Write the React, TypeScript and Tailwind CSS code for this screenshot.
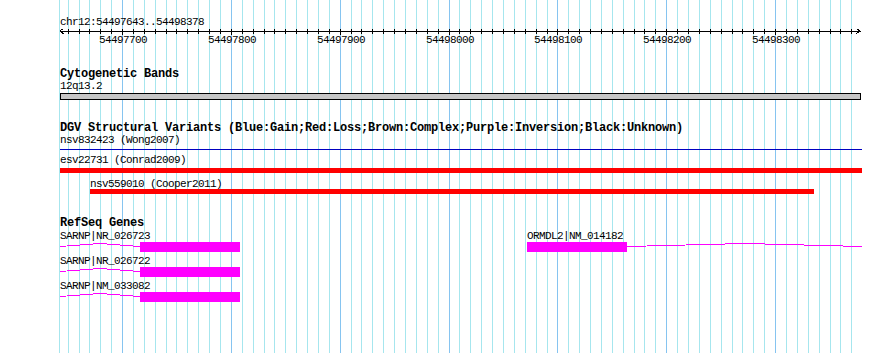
import React from 'react';

const START = 54497643;
const END = 54498378;
const LEFT = 60;
const SPAN = 800;

const toX = (bp: number) => LEFT + Math.round(((bp - START) * SPAN) / (END - START));

const GRID_BP: number[] = [];
for (let bp = 54497650; bp <= END; bp += 10) GRID_BP.push(bp);

const MAJOR_BP = GRID_BP.filter((bp) => bp % 100 === 0);

function Grid() {
  return (
    <svg
      className="absolute inset-0"
      width={890}
      height={353}
      shapeRendering="crispEdges"
    >
      <rect x={59} y={0} width={1} height={353} fill="#a6e6ee" />
      {GRID_BP.map((bp) => (
        <rect
          key={bp}
          x={toX(bp)}
          y={0}
          width={1}
          height={353}
          fill={bp % 100 === 0 ? '#86c4f0' : '#a6e6ee'}
        />
      ))}
    </svg>
  );
}

function Ruler() {
  return (
    <svg className="block" width={890} height={18} shapeRendering="crispEdges">
      <rect x={60} y={2} width={801} height={1} fill="#000" />
      <polyline points="64,-1 60,2 64,5" fill="none" stroke="#000" strokeWidth={1} />
      <polyline points="856,-1 860,2 856,5" fill="none" stroke="#000" strokeWidth={1} />
      {GRID_BP.map((bp) => (
        <rect key={bp} x={toX(bp)} y={0} width={1} height={bp % 100 === 0 ? 6 : 5} fill="#000" />
      ))}
      {MAJOR_BP.map((bp) => (
        <text
          key={bp}
          x={toX(bp) + 1}
          y={14}
          textAnchor="middle"
          fontFamily="'Liberation Mono', monospace"
          fontSize={11}
          letterSpacing={-0.6}
          fill="#000"
        >
          {bp}
        </text>
      ))}
    </svg>
  );
}

// intron "hat" from x1 to x2, peak at the middle
function Intron({ x1, x2 }: { x1: number; x2: number }) {
  const mid = Math.round((x1 + x2) / 2);
  return (
    <polyline
      points={`${x1},4.5 ${mid},1.5 ${x2},4.5`}
      fill="none"
      stroke="#ff00ff"
      strokeWidth={1}
    />
  );
}

const SARNP = ['SARNP|NR_026723', 'SARNP|NR_026722', 'SARNP|NM_033082'];

const title = 'h-[13px] text-[12px] leading-[13px] font-bold tracking-[-0.2px] whitespace-nowrap';
const small = 'h-[10px] text-[11px] leading-[10px] tracking-[-0.6px] whitespace-nowrap';

export default function App() {
  return (
    <div className="relative w-[890px] h-[353px] overflow-hidden bg-white font-['Liberation_Mono',monospace] text-black">
      <Grid />

      <div className="relative pt-[16px]">
        <div className="pl-[60px] h-[13px] text-[11px] leading-[13px] tracking-[-0.6px]">
          chr12:54497643..54498378
        </div>
        <Ruler />

        {/* Cytogenetic Bands */}
        <div className={`mt-[21px] pl-[60px] ${title}`}>Cytogenetic Bands</div>
        <div className={`pl-[60px] ${small}`}>12q13.2</div>
        <div className="mt-[2px] ml-[60px] w-[801px] h-[7px] border border-black bg-[#c6c6c6]" />

        {/* DGV */}
        <div className={`mt-[22px] pl-[60px] ${title}`}>
          DGV Structural Variants (Blue:Gain;Red:Loss;Brown:Complex;Purple:Inversion;Black:Unknown)
        </div>
        <div className={`pl-[60px] ${small}`}>nsv832423 (Wong2007)</div>
        <div className="mt-[4px] ml-[60px] w-[802px] h-px bg-[#0000c0]" />
        <div className={`mt-[5px] pl-[60px] ${small}`}>esv22731 (Conrad2009)</div>
        <div className="mt-[3px] ml-[60px] w-[802px] h-[5px] bg-[#ff0000]" />
        <div className={`mt-[6px] pl-[90px] ${small}`}>nsv559010 (Cooper2011)</div>
        <div className="ml-[90px] w-[724px] h-[5px] bg-[#ff0000]" />

        {/* RefSeq Genes */}
        <div className={`mt-[23px] pl-[60px] ${title}`}>RefSeq Genes</div>
        <div className="flex flex-col gap-[4px] mt-px">
          {SARNP.map((name, i) => (
            <div key={name}>
              <div className={`flex pl-[60px] ${small}`}>
                <div className="w-[467px]">{name}</div>
                {i === 0 && <div>ORMDL2|NM_014182</div>}
              </div>
              <svg className="block mt-px" width={890} height={10} shapeRendering="crispEdges">
                <Intron x1={60} x2={140} />
                <rect x={140} y={0} width={100} height={10} fill="#ff00ff" />
                {i === 0 && (
                  <>
                    <rect x={527} y={0} width={100} height={10} fill="#ff00ff" />
                    <Intron x1={627} x2={862} />
                  </>
                )}
              </svg>
            </div>
          ))}
        </div>
      </div>
    </div>
  );
}
